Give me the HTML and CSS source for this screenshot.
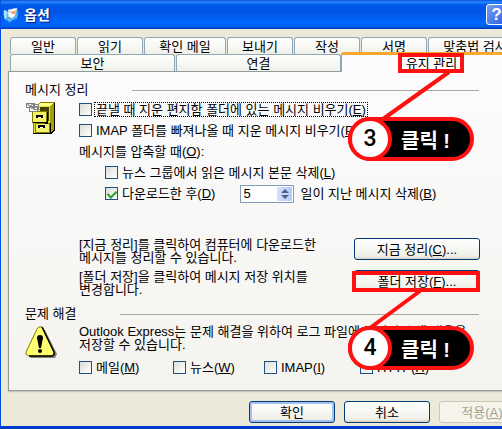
FILE: index.html
```html
<!DOCTYPE html>
<html lang="ko">
<head>
  <meta charset="UTF-8">
  <meta name="viewport" content="width=device-width, initial-scale=1.0">
  <title>옵션</title>
  <link rel="stylesheet" href="styles.css">
</head>
<body>

<div class="dialog">
  <header class="titlebar">
    <svg class="title-icon" viewBox="0 0 16 16">
      <path d="M1 4l5 2v8l-5-3z" fill="#5cc3f5"/>
      <path d="M1 3c2 0 3 1 4 3l-2 1 1 7c-3-2-4-7-3-11z" fill="#a9e3ff"/>
      <path d="M5 3l9-2v10l-8 2z" fill="#fff" stroke="#c5d5ea" stroke-width=".5"/>
      <path d="M6 4l4 3 4-5" fill="none" stroke="#8fa6cc"/>
      <path d="M9 4h3v3H9z" fill="#e9a36b"/>
      <path d="M15 4c1 5-2 9-7 10l-1 2-4-4 4-2v2c4-1 6-3 6-7z" fill="#58bdf2" stroke="#1769bd" stroke-width=".5"/>
    </svg>
    <h1>옵션</h1>
    <button class="help" type="button">?</button>
  </header>

  <!-- 탭 -->
  <nav class="tabs">
    <div class="tab-row">
      <button class="tab" type="button">일반</button>
      <button class="tab" type="button">읽기</button>
      <button class="tab mid" type="button">확인 메일</button>
      <button class="tab" type="button">보내기</button>
      <button class="tab" type="button">작성</button>
      <button class="tab" type="button">서명</button>
      <button class="tab large" type="button">맞춤법 검사</button>
    </div>
    <div class="tab-row">
      <button class="tab wide" type="button">보안</button>
      <button class="tab wide" type="button">연결</button>
      <button class="tab active" type="button">유지 관리</button>
    </div>
  </nav>

  <main class="panel">
    <!-- 메시지 정리 -->
    <h2>메시지 정리</h2>
    <section class="group">
      <svg class="icon" viewBox="0 0 32 32" shape-rendering="crispEdges">
        <path d="M12 3l4-3h14v28l-4 4H8V12h4z" fill="#808000"/>
        <path d="M13 3l3-2h12l-3 3H13z" fill="#ffff80"/>
        <path d="M13 4h12v27H9V13h4z" fill="#e6e22e"/>
        <path d="M25 4l4-3v26l-4 4z" fill="#a5a000"/>
        <path d="M15 5h9v14h-2V9h-7z" fill="#404000"/>
        <path d="M7 9h14v11H7zM10 21h14v9H10z" fill="#f5f26a" stroke="#808000"/>
        <path d="M22 10v11h-2M25 21v10H9M8 20h14" fill="none" stroke="#000"/>
        <path d="M11 13h7v3h-2v-1h-3v1h-2zM13 23h7v3h-2v-1h-3v1h-2z" fill="#000"/>
        <path d="M13 15h3v1h-3zM15 25h3v1h-3z" fill="#fff"/>
        <path d="M1 1h8v4H1zM4 4h8v5H4zM8 2h5v5H8z" fill="#fff" stroke="#808080"/>
        <path d="M2 2l3 2 3-2M5 5l3 2 4-2" fill="none" stroke="#a0a0a0"/>
        <path d="M29 1h1v27l-4 4H8v-1h18l3-4z" fill="#000"/>
      </svg>
      <div class="options">
        <label><input type="checkbox"><span class="focus">끝낼 때 지운 편지함 폴더에 있는 메시지 비우기(<u>E</u>)</span></label>
        <label><input type="checkbox"><span>IMAP 폴더를 빠져나올 때 지운 메시지 비우기(<u>P</u>)</span></label>
        <p>메시지를 압축할 때(<u>O</u>):</p>
        <label class="sub"><input type="checkbox"><span>뉴스 그룹에서 읽은 메시지 본문 삭제(<u>L</u>)</span></label>
        <div class="sub days">
          <label><input type="checkbox" checked><span>다운로드한 후(<u>D</u>)</span></label>
          <div class="spinner">
            <input id="days" type="text" value="5">
            <div class="arrows">
              <button type="button" aria-label="증가"><svg viewBox="0 0 8 5"><path d="M0 5l4-4 4 4z"/></svg></button>
              <button type="button" aria-label="감소"><svg viewBox="0 0 8 5"><path d="M0 0l4 4 4-4z"/></svg></button>
            </div>
          </div>
          <label for="days"><span>일이 지난 메시지 삭제(<u>B</u>)</span></label>
        </div>
      </div>
    </section>

    <section class="actions">
      <p>[지금 정리]를 클릭하여 컴퓨터에 다운로드한<br>메시지를 정리할 수 있습니다.</p>
      <button class="btn" type="button">지금 정리(<u>C</u>)...</button>
      <p>[폴더 저장]을 클릭하여 메시지 저장 위치를<br>변경합니다.</p>
      <button class="btn" type="button">폴더 저장(<u>F</u>)...</button>
    </section>

    <!-- 문제 해결 -->
    <h2>문제 해결</h2>
    <section class="group">
      <svg class="icon" viewBox="0 0 32 32">
        <path d="M17 3l3 1 12 24-2 4H5z" fill="#808080"/>
        <path d="M15 1q2-1 3 1l11 24q1 3-2 4H4q-4-1-3-4L12 3q1-2 3-2z" fill="#ffff70" stroke="#808000"/>
        <path d="M17 1l12 25q1 3-2 4H4" fill="none" stroke="#000" stroke-width="1.5"/>
        <path d="M12 12q0-3 3-3t3 3l-2 10h-2z"/>
        <circle cx="15" cy="25" r="2"/>
      </svg>
      <div>
        <p class="desc">Outlook Express는 문제 해결을 위하여 로그 파일에 명령의 수행 내용을<br>저장할 수 있습니다.</p>
        <div class="logs">
          <label><input type="checkbox"><span>메일(<u>M</u>)</span></label>
          <label><input type="checkbox"><span>뉴스(<u>W</u>)</span></label>
          <label><input type="checkbox"><span>IMAP(<u>I</u>)</span></label>
          <label><input type="checkbox"><span>HTTP(<u>H</u>)</span></label>
        </div>
      </div>
    </section>
  </main>

  <footer class="buttons">
    <button class="btn default" type="button">확인</button>
    <button class="btn" type="button">취소</button>
    <button class="btn" type="button" disabled>적용(<u>A</u>)</button>
  </footer>
</div>

<!-- 설명 표시 -->
<svg class="marks" width="502" height="429" viewBox="0 0 502 429">
  <rect x="400" y="55" width="62" height="16"/>
  <rect x="354" y="273" width="124" height="17"/>
  <path d="M449 72L383 119M420 291L370 328"/>
</svg>
<div class="callout step3"><b>3</b><span>클릭 !</span></div>
<div class="callout step4"><b>4</b><span>클릭 !</span></div>

</body>
</html>
```
FILE: styles.css
```css
* {
  box-sizing: border-box;
}

body {
  position: relative;
  margin: 0;
  overflow: hidden;
  font: 13px/13px "Liberation Sans", "Noto Sans CJK KR", sans-serif;
  color: #000;
}

button,
input {
  font: inherit;
  color: inherit;
}

p,
h1,
h2 {
  margin: 0;
}

/* 창 */
.dialog {
  min-height: 100vh;
  overflow: hidden;
  border-left: 1px solid #0050e6;
  border-bottom: 3px solid #0038d0;
  background: #ece9d8;
  white-space: nowrap;
}

.titlebar {
  display: flex;
  align-items: center;
  gap: 5px;
  height: 29px;
  padding-left: 2px;
  background: linear-gradient(#0a50d8, #2a86ff 2px, #0058ea 5px, #0054e6 12px, #0066ff 22px, #0062f8 26px, #0038b8);
}

.title-icon {
  width: 16px;
  height: 16px;
}

.titlebar h1 {
  font-size: 14px;
  line-height: 16px;
  color: #fff;
  text-shadow: 1px 1px 1px #0a1883;
}

.help {
  width: 21px;
  height: 21px;
  margin-left: auto;
  margin-right: -5px;
  padding: 0;
  border: 1px solid #fff;
  border-radius: 3px;
  background: linear-gradient(135deg, #7a9ef0, #2a5fe0);
  color: #fff;
  font-size: 17px;
  font-weight: bold;
}

/* 탭 */
.tabs {
  padding: 8px 0 0 9px;
}

.tab-row {
  display: flex;
  gap: 1px;
  height: 17px;
}

.tab {
  flex: none;
  width: 66px;
  padding: 0;
  border: 1px solid #91a7b4;
  border-bottom: 0;
  border-radius: 3px 3px 0 0;
  background: linear-gradient(#fff, #f0f0ea);
}

.tab.mid {
  width: 82px;
}

.tab.large {
  width: 94px;
}

.tab.wide {
  width: 165px;
}

.tab.active {
  z-index: 1;
  width: 181px;
  height: 20px;
  margin: -2px 0 0 -1px;
  border-top: 3px solid #f9a82f;
  background: #fcfcfe;
}

.panel {
  height: 320px;
  margin-left: 7px;
  padding: 11px 23px 0 16px;
  border: 1px solid #919b9c;
  border-right: 0;
  box-shadow: 0 1px 1px #c8c5b4;
  background: linear-gradient(#fcfcfe, #f4f3ee);
}

h2 {
  display: flex;
  align-items: center;
  gap: 44px;
  font-size: 13px;
  font-weight: normal;
  line-height: 14px;
}

h2::after {
  content: "";
  flex: 1;
  height: 1px;
  background: #aca899;
}

.group {
  display: grid;
  grid-template-columns: 54px 1fr;
}

.icon {
  width: 32px;
  height: 32px;
  margin-top: 5px;
}

.options {
  display: grid;
  grid-auto-rows: 21px;
  align-items: center;
  padding-top: 2px;
}

.sub {
  margin-left: 26px;
}

.panel label {
  display: flex;
  align-items: center;
  gap: 2px;
}

.panel label span {
  padding: 0 1px;
  border: 1px solid transparent;
}

.panel label .focus {
  border: 1px dotted #000;
}

input[type="checkbox"] {
  appearance: none;
  flex: none;
  width: 13px;
  height: 13px;
  margin: 0;
  border: 1px solid #1c5180;
  background: linear-gradient(135deg, #dcdcd7, #fff);
}

input[type="checkbox"]:checked::before {
  content: "";
  display: block;
  width: 4px;
  height: 7px;
  margin: 1px auto 0;
  border: solid #21a121;
  border-width: 0 2px 2px 0;
  transform: rotate(45deg);
}

.days {
  display: flex;
  align-items: center;
}

.spinner {
  display: flex;
  width: 54px;
  height: 18px;
  margin: 0 4px 0 23px;
  padding: 1px;
  border: 1px solid #7f9db9;
  background: #fff;
}

.spinner input {
  flex: 1;
  min-width: 0;
  padding: 0 1px;
  border: 0;
  outline: 0;
  background: none;
}

.arrows {
  display: grid;
  width: 15px;
}

.arrows button {
  display: grid;
  place-items: center;
  padding: 0;
  border: 0;
  background: linear-gradient(90deg, #d3e1fe, #b4cbf8);
}

.arrows svg {
  width: 8px;
  height: 5px;
  fill: #4d6185;
}

/* 버튼 */
.actions {
  display: grid;
  grid-template-columns: 1fr 126px;
  grid-auto-rows: 26px;
  gap: 6px;
  margin: 34px -1px 11px 54px;
}

.btn {
  height: 22px;
  padding: 0;
  border: 1px solid #003c74;
  border-radius: 3px;
  background: linear-gradient(#fff, #f0f0ea 85%, #d8d0c4);
}

.btn.default {
  box-shadow: inset 0 0 0 2px #a4bff0;
}

.btn:disabled {
  border-color: #c9c7ba;
  background: #f5f4ea;
  color: #a1a192;
}

.desc {
  padding-top: 4px;
}

.logs {
  display: grid;
  grid-template-columns: 94px 91px 96px auto;
  margin-top: 9px;
}

.buttons {
  display: flex;
  justify-content: flex-end;
  gap: 9px;
  padding: 10px 0 3px;
  margin-right: -23px;
}

.buttons .btn {
  width: 86px;
}

/* 설명 표시 */
.marks {
  position: absolute;
  top: 0;
  left: 0;
  z-index: 2;
  fill: none;
  stroke: #f11;
  stroke-width: 4px;
}

.callout {
  position: absolute;
  left: 348px;
  z-index: 3;
  display: flex;
  align-items: center;
  width: 126px;
  height: 44px;
  border: 4px solid #f11;
  border-radius: 22px;
  background: #000;
  color: #fff;
}

.callout b {
  width: 44px;
  height: 44px;
  margin: -4px 0 -4px -4px;
  border: 4px solid #f11;
  border-radius: 50%;
  background: #fff;
  color: #000;
  font: 500 23px/36px Roboto, sans-serif;
  text-align: center;
}

.callout span {
  padding-top: 3px;
  margin-left: 9px;
  font-size: 20px;
  font-weight: bold;
  line-height: 24px;
}

.step3 {
  top: 117px;
}

.step4 {
  top: 326px;
}
```
